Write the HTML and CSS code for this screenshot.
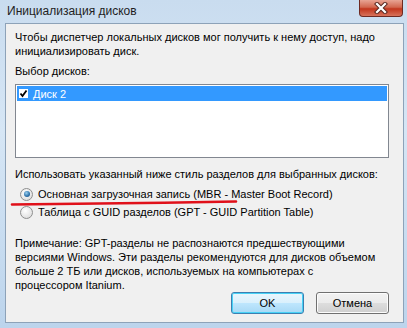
FILE: index.html
```html
<!DOCTYPE html>
<html lang="ru">
<head>
    <meta charset="UTF-8">
    <title>Инициализация дисков</title>
    <link rel="stylesheet" href="styles.css">
</head>
<body>

    <div class="window">
        <div class="titlebar">
            <span class="title">Инициализация дисков</span>
            <div class="close-btn">
                <svg width="16" height="12" viewBox="0 0 16 12">
                    <path d="M4 2 L12 10 M12 2 L4 10" stroke="#5a2a22" stroke-width="4.2" stroke-linecap="square"/>
                    <path d="M4 2 L12 10 M12 2 L4 10" stroke="#ffffff" stroke-width="2.2" stroke-linecap="square"/>
                </svg>
            </div>
        </div>

        <div class="client">
            <p class="intro">Чтобы диспетчер локальных дисков мог получить к нему доступ, надо<br>инициализировать диск.</p>

            <div class="label">Выбор дисков:</div>
            <div class="listbox">
                <div class="list-item selected">
                    <span class="checkbox">
                        <svg width="9" height="9" viewBox="0 0 9 9">
                            <path d="M1.5 4.5 L3.5 7 L7.5 1.5" fill="none" stroke="#000" stroke-width="1.8"/>
                        </svg>
                    </span>
                    <span>Диск 2</span>
                </div>
            </div>

            <div class="label style-label">Использовать указанный ниже стиль разделов для выбранных дисков:</div>
            <div class="radio-row first">
                <span class="radio checked"></span>
                <span>Основная загрузочная запись (MBR - Master Boot Record)</span>
            </div>
            <div class="radio-row">
                <span class="radio"></span>
                <span>Таблица с GUID разделов (GPT - GUID Partition Table)</span>
            </div>

            <p class="note">Примечание: GPT-разделы не распознаются предшествующими<br>версиями Windows. Эти разделы рекомендуются для дисков объемом<br>больше 2 ТБ или дисков, используемых на компьютерах с<br>процессором Itanium.</p>

            <div class="buttons">
                <button class="btn default">OK</button>
                <button class="btn">Отмена</button>
            </div>

            <svg class="red-mark" width="230" height="8" viewBox="0 0 230 8">
                <path d="M2 5.5 C60 5, 150 4, 226 2.5" fill="none" stroke="#e0101a" stroke-width="2.6" stroke-linecap="round"/>
            </svg>
        </div>
    </div>

</body>
</html>
```

FILE: styles.css
```css
body {
    margin: 0;
    font-family: 'Liberation Sans', Arial, sans-serif;
    font-size: 11px;
    color: #000;
}

.window {
    width: 407px;
    height: 328px;
    box-sizing: border-box;
    background: linear-gradient(to bottom, #c9dcef, #d6e6f5 40%, #bcd4ec);
    padding: 0 3px 5px 5px;
    display: flex;
    flex-direction: column;
}

.titlebar {
    height: 23px;
    display: flex;
    align-items: flex-start;
    justify-content: space-between;
    flex-shrink: 0;
}

.title {
    margin-top: 4px;
    margin-left: 2px;
    font-size: 12px;
    color: #1e1e1e;
}

.close-btn {
    width: 44px;
    height: 17px;
    margin-right: 1px;
    box-sizing: border-box;
    border: 1px solid #6e2a22;
    border-top: none;
    border-radius: 0 0 4px 4px;
    background: linear-gradient(to bottom, #e8a493, #d2674f 45%, #c2361d 55%, #d7735c);
    display: flex;
    align-items: center;
    justify-content: center;
}

.client {
    position: relative;
    flex: 1;
    background: #f0f0f0;
    border: 1px solid #8da2b8;
    padding: 6px 14px 0 9px;
    white-space: nowrap;
}

.intro {
    margin: 0;
    line-height: 14px;
}

.label {
    margin-top: 6px;
    line-height: 14px;
}

.listbox {
    margin-top: 6px;
    height: 70px;
    background: #fff;
    border: 1px solid #828790;
    padding: 1px;
}

.list-item {
    height: 15px;
    display: flex;
    align-items: center;
    gap: 5px;
    padding-left: 2px;
}

.list-item.selected {
    background: #3399ff;
    color: #fff;
}

.checkbox {
    width: 9px;
    height: 9px;
    background: #fff;
    display: flex;
}

.style-label {
    margin-top: 9px;
}

.radio-row {
    height: 18px;
    display: flex;
    align-items: center;
    gap: 5px;
    padding-left: 5px;
}

.radio-row.first {
    margin-top: 4px;
}

.radio {
    width: 11px;
    height: 11px;
    border-radius: 50%;
    border: 1px solid #8e8f8f;
    background: radial-gradient(circle at 40% 35%, #ffffff, #e2e2e2 70%, #cfcfcf);
    position: relative;
}

.radio.checked::after {
    content: "";
    position: absolute;
    left: 2.5px;
    top: 2.5px;
    width: 6px;
    height: 6px;
    border-radius: 50%;
    background: radial-gradient(circle at 40% 35%, #9ad0f0, #2a6fa8 60%, #1c4f80);
}

.note {
    margin: 15px 0 0;
    line-height: 14px;
}

.buttons {
    display: flex;
    justify-content: flex-end;
    gap: 12px;
    margin-top: 0;
}

.btn {
    width: 73px;
    height: 22px;
    font-family: 'Liberation Sans', Arial, sans-serif;
    font-size: 11px;
    color: #000;
    border: 1px solid #707070;
    border-radius: 3px;
    background: linear-gradient(to bottom, #f2f2f2, #ebebeb 50%, #dddddd 51%, #cfcfcf);
    box-shadow: inset 0 0 0 1px #fcfcfc;
    padding: 0;
}

.btn.default {
    border-color: #3c7fb1;
    background: linear-gradient(to bottom, #eaf6fd, #d9f0fc 50%, #bee6fd 51%, #a7d9f5);
    box-shadow: inset 0 0 0 1px #48d2f6;
}

.red-mark {
    position: absolute;
    left: 4px;
    top: 175px;
}
```
